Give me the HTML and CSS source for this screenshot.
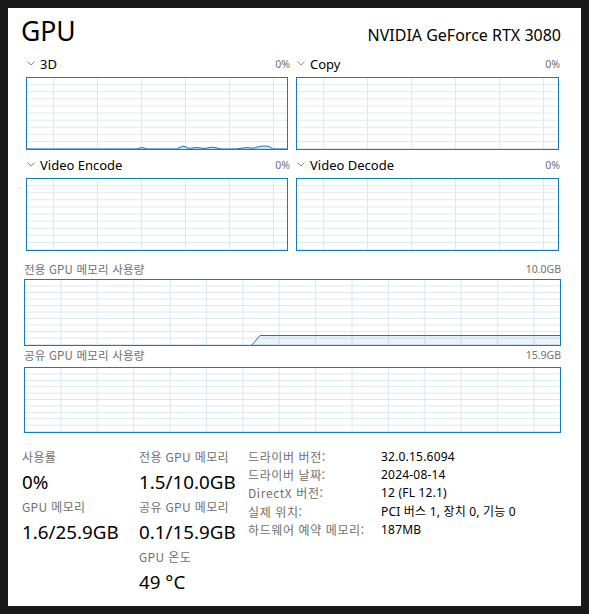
FILE: index.html
```html
<!DOCTYPE html>
<html lang="ko">
<head>
<meta charset="utf-8">
<title>GPU</title>
<link rel="stylesheet" href="styles.css">
</head>
<body>
<div class="panel">
  <header class="header">
    <h1 class="title">GPU</h1>
    <div class="model">NVIDIA GeForce RTX 3080</div>
  </header>

  <section class="engines">
    <div class="engine">
      <div class="engine-head">
        <span class="engine-name"><svg class="chev" width="8" height="5" viewBox="0 0 8 5"><polyline points="0.5,0.5 4,4 7.5,0.5" fill="none" stroke="#8a8a8a" stroke-width="1"/></svg>3D</span>
        <span class="pct">0%</span>
      </div>
      <div class="graph graph-engine">
        <svg class="trace" viewBox="0 0 260 71" preserveAspectRatio="none">
          <polyline points="0,71 110,71 112,70 116,69.6 120,71 150,71 153,69.2 156,68.2 159,69 162,70.4 166,70 170,69.5 174,70 178,70.5 182,69.6 186,69.2 190,70 194,71 210,71 214,70.2 220,69.6 226,70.2 230,69.2 234,68.3 238,68 242,68.6 245,70.5 247,71 260,71" fill="rgba(17,125,187,0.12)" stroke="#117dbb" stroke-width="1"/>
        </svg>
      </div>
    </div>
    <div class="engine">
      <div class="engine-head">
        <span class="engine-name"><svg class="chev" width="8" height="5" viewBox="0 0 8 5"><polyline points="0.5,0.5 4,4 7.5,0.5" fill="none" stroke="#8a8a8a" stroke-width="1"/></svg>Copy</span>
        <span class="pct">0%</span>
      </div>
      <div class="graph graph-engine"></div>
    </div>
    <div class="engine">
      <div class="engine-head">
        <span class="engine-name"><svg class="chev" width="8" height="5" viewBox="0 0 8 5"><polyline points="0.5,0.5 4,4 7.5,0.5" fill="none" stroke="#8a8a8a" stroke-width="1"/></svg>Video Encode</span>
        <span class="pct">0%</span>
      </div>
      <div class="graph graph-engine"></div>
    </div>
    <div class="engine">
      <div class="engine-head">
        <span class="engine-name"><svg class="chev" width="8" height="5" viewBox="0 0 8 5"><polyline points="0.5,0.5 4,4 7.5,0.5" fill="none" stroke="#8a8a8a" stroke-width="1"/></svg>Video Decode</span>
        <span class="pct">0%</span>
      </div>
      <div class="graph graph-engine"></div>
    </div>
  </section>

  <section class="memory memory-dedicated">
    <div class="mem-head">
      <span class="mem-title">전용 GPU 메모리 사용량</span>
      <span class="pct">10.0GB</span>
    </div>
    <div class="graph graph-mem">
      <svg class="trace" viewBox="0 0 535 65" preserveAspectRatio="none">
        <polygon points="226.5,65.5 235,55.5 536,55.5 536,66 226.5,66" fill="rgba(17,125,187,0.09)" stroke="none"/>
        <polyline points="226.5,65.5 235,55.5 536,55.5" fill="none" stroke="#117dbb" stroke-width="1"/>
      </svg>
    </div>
  </section>

  <section class="memory memory-shared">
    <div class="mem-head">
      <span class="mem-title">공유 GPU 메모리 사용량</span>
      <span class="pct">15.9GB</span>
    </div>
    <div class="graph graph-mem graph-shared"></div>
  </section>

  <section class="stats">
    <div class="stat-col stat-col1">
      <div class="stat-label">사용률</div>
      <div class="stat-value">0%</div>
      <div class="stat-label">GPU 메모리</div>
      <div class="stat-value">1.6/25.9GB</div>
    </div>
    <div class="stat-col stat-col2">
      <div class="stat-label">전용 GPU 메모리</div>
      <div class="stat-value">1.5/10.0GB</div>
      <div class="stat-label">공유 GPU 메모리</div>
      <div class="stat-value">0.1/15.9GB</div>
      <div class="stat-label">GPU 온도</div>
      <div class="stat-value">49 °C</div>
    </div>
    <dl class="props">
      <dt>드라이버 버전:</dt><dd>32.0.15.6094</dd>
      <dt>드라이버 날짜:</dt><dd>2024-08-14</dd>
      <dt>DirectX 버전:</dt><dd>12 (FL 12.1)</dd>
      <dt>실제 위치:</dt><dd>PCI 버스 1, 장치 0, 기능 0</dd>
      <dt>하드웨어 예약 메모리:</dt><dd>187MB</dd>
    </dl>
  </section>
</div>
</body>
</html>
```

FILE: styles.css
```css
* { box-sizing: border-box; }

html, body {
  margin: 0;
  padding: 0;
  background: #191919;
}

body {
  font-family: "Noto Sans", "Noto Sans CJK KR", sans-serif;
  color: #000;
  padding: 8px;
}

.panel {
  width: 573px;
  height: 598px;
  background: #fff;
  padding: 0 20px 0 13px;
  overflow: hidden;
}

.header {
  height: 47px;
  display: flex;
  justify-content: space-between;
  align-items: baseline;
  padding-top: 3px;
}

.title {
  margin: 0;
  font-weight: 400;
  font-size: 26.5px;
  line-height: 40px;
}

.model {
  font-size: 16px;
  line-height: 40px;
}

.engines {
  margin-left: 5px;
  display: grid;
  grid-template-columns: 264px 264px;
  column-gap: 6px;
  row-gap: 6px;
}

.engine-head {
  height: 17px;
  margin-bottom: 5px;
  display: flex;
  justify-content: space-between;
  align-items: center;
}

.engine-name {
  display: flex;
  align-items: center;
  font-size: 13px;
  padding-left: 1px;
}

.chev {
  margin-right: 5px;
  display: block;
}

.pct {
  font-size: 10.5px;
  color: #707070;
}

.graph {
  position: relative;
  border: 1px solid #117dbb;
  background-color: #fff;
}

.graph-engine {
  width: 262px;
  height: 73px;
  background-image:
    linear-gradient(to right, transparent 43px, #d9e8f3 43px),
    linear-gradient(to bottom, transparent calc(100% - 1px), #d9e8f3 calc(100% - 1px));
  background-size: 44px 100%, 100% 10%;
  background-position: 27px 0, 0 0;
}

.engine:nth-child(even) .graph-engine {
  width: 263px;
}

.memory {
  margin-left: 3px;
}

.memory-dedicated {
  margin-top: 10px;
}

.mem-head {
  height: 16px;
  display: flex;
  justify-content: space-between;
  align-items: center;
  font-family: "Noto Sans CJK KR", "Noto Sans", sans-serif;
  font-size: 11.5px;
  color: #707070;
  margin-bottom: 2px;
}

.mem-title {
  letter-spacing: 0.2px;
}

.mem-head .pct {
  font-family: "Noto Sans", sans-serif;
}

.memory-shared {
  margin-top: 1px;
}

.memory-shared .mem-head {
  margin-bottom: 4px;
}

.graph-mem {
  width: 537px;
  height: 67px;
  background-image:
    linear-gradient(to right, transparent 35.4px, #d9e8f3 35.4px),
    linear-gradient(to bottom, transparent calc(100% - 1px), #d9e8f3 calc(100% - 1px));
  background-size: 36.4px 100%, 100% 10%;
  background-position: 0 0, 0 0;
}

.graph-shared {
  height: 66px;
}

.trace {
  position: absolute;
  left: 0;
  top: 0;
  width: 100%;
  height: 100%;
  display: block;
}

.stats {
  margin-top: 15px;
  margin-left: 1px;
  display: flex;
  align-items: flex-start;
}

.stat-col1 { width: 117px; }
.stat-col2 { width: 109px; }

.stat-label {
  font-family: "Noto Sans CJK KR", sans-serif;
  font-size: 12px;
  line-height: 18px;
  color: #707070;
  white-space: nowrap;
  letter-spacing: 0.35px;
}

.stat-value {
  font-size: 18.8px;
  line-height: 32px;
  white-space: nowrap;
}

.props {
  margin: 0;
  display: grid;
  grid-template-columns: 133px auto;
  align-content: start;
  font-size: 12px;
  line-height: 18.2px;
}

.props dt {
  font-family: "Noto Sans CJK KR", sans-serif;
  color: #707070;
  white-space: nowrap;
  letter-spacing: 0.6px;
}

.props dd {
  margin: 0;
  font-family: "Noto Sans", "Noto Sans CJK KR", sans-serif;
  white-space: nowrap;
  letter-spacing: 0.2px;
}
```
